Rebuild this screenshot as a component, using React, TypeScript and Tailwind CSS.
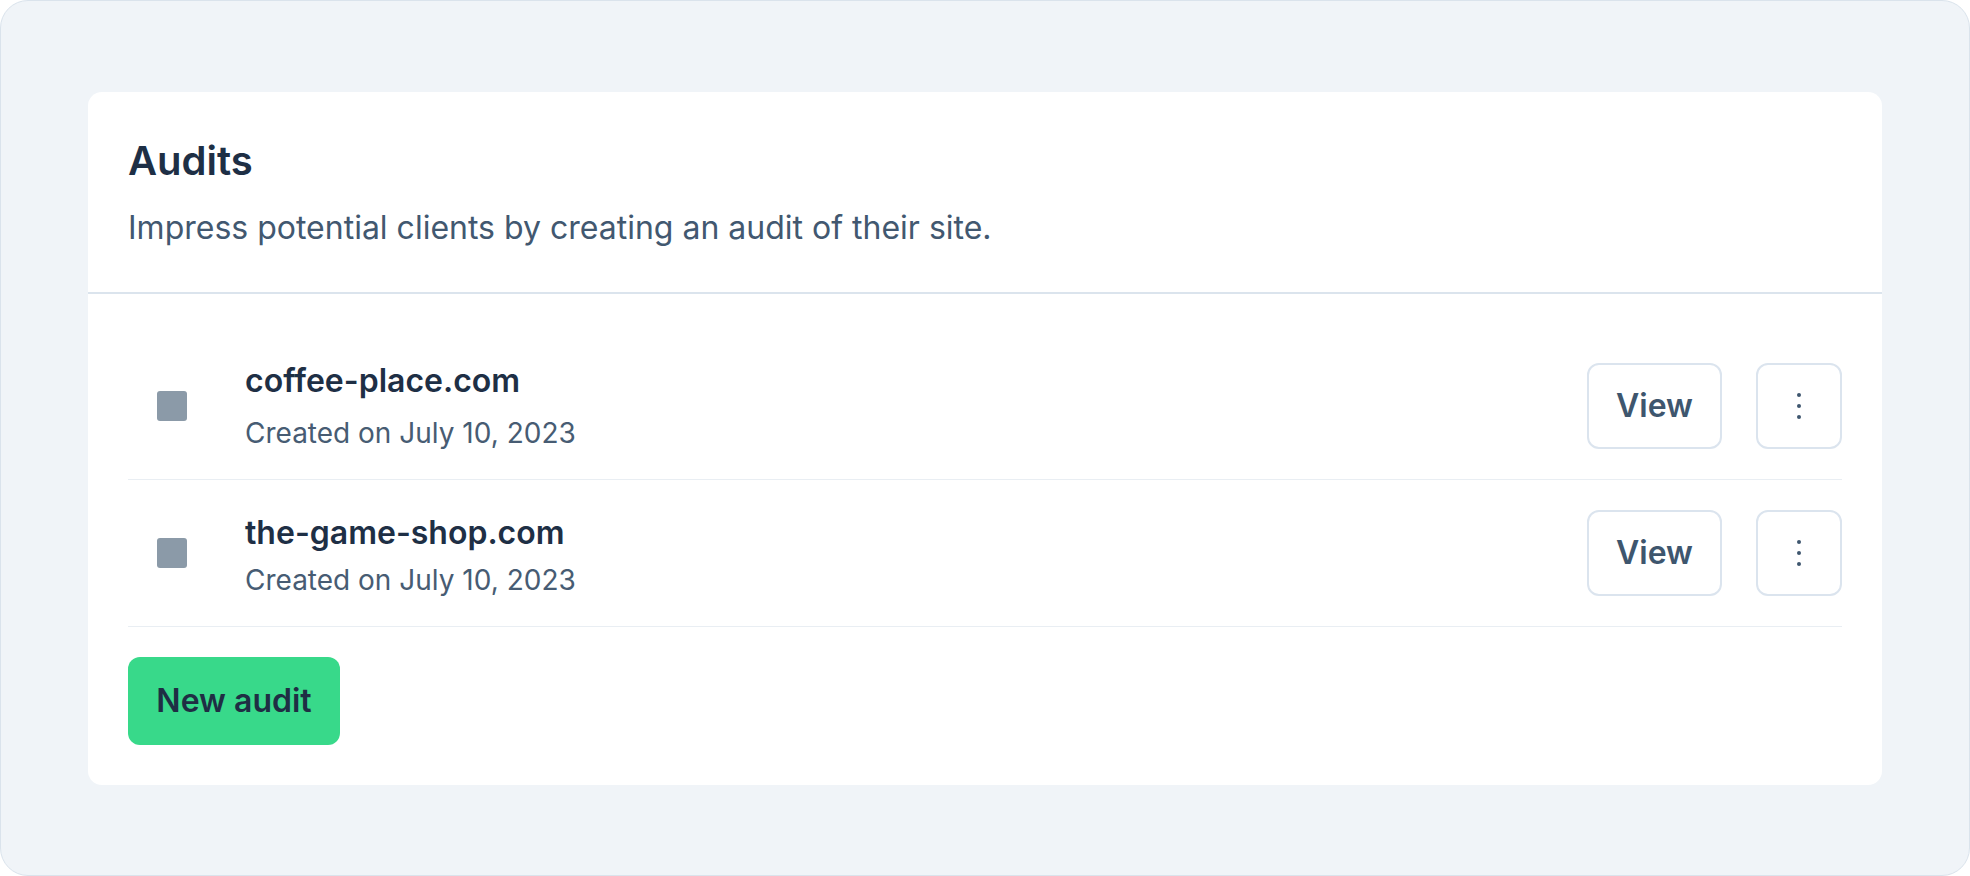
import React from "react";

const audits = [
  { id: "coffee", domain: "coffee-place.com", created: "Created on July 10, 2023", first: true },
  { id: "game", domain: "the-game-shop.com", created: "Created on July 10, 2023", first: false },
];

function DotsIcon() {
  return (
    <svg width="6" height="28" viewBox="0 0 6 28" fill="#3e566e" aria-hidden="true">
      <circle cx="3" cy="3" r="2" />
      <circle cx="3" cy="14" r="2" />
      <circle cx="3" cy="25" r="2" />
    </svg>
  );
}

function AuditRow({ domain, created, first }: { domain: string; created: string; first: boolean }) {
  return (
    <div className="flex h-[147px] items-center border-b border-[#e9eef3]">
      <div className="ml-[29px] h-[30px] w-[30px] shrink-0 rounded-[3px] bg-[#8b9aa8]" />
      <div className={first ? "ml-[58px] flex min-w-0 flex-1 flex-col" : "ml-[58px] flex min-w-0 flex-1 flex-col pt-[6px]"}>
        <p className="text-[32px] font-semibold leading-[32px] text-[#1e2f45]">{domain}</p>
        <p className={first ? "mt-[22px] text-[28px] leading-[28px] text-[#475c73]" : "mt-[17px] text-[28px] leading-[28px] text-[#475c73]"}>
          {created}
        </p>
      </div>
      <div className="flex items-center gap-[34px]">
        <button className="h-[86px] w-[135px] rounded-[12px] border-2 border-[#dbe4ee] bg-white text-[32px] font-semibold text-[#3e566e]">
          View
        </button>
        <button className="flex h-[86px] w-[86px] items-center justify-center rounded-[12px] border-2 border-[#dbe4ee] bg-white">
          <DotsIcon />
        </button>
      </div>
    </div>
  );
}

export default function App() {
  return (
    <div className="flex h-[876px] w-full flex-col justify-center rounded-[28px] border border-[#dae3ec] bg-[#f0f4f8] px-[87px] font-['Inter','Noto_Sans',sans-serif]">
      <div className="rounded-[14px] bg-white">
        <div className="border-b-2 border-[#dbe4ed] px-10 pb-[44px] pt-[45px]">
          <h2 className="text-[40px] font-semibold leading-[48px] text-[#1e2f45]">Audits</h2>
          <p className="mt-[23px] text-[32px] leading-[40px] text-[#425870]">
            Impress potential clients by creating an audit of their site.
          </p>
        </div>
        <div className="px-10 pb-10 pt-[39px]">
          {audits.map((audit) => (
            <AuditRow key={audit.id} domain={audit.domain} created={audit.created} first={audit.first} />
          ))}
          <button className="mt-[30px] h-[88px] w-[212px] rounded-[12px] bg-[#38d98a] text-[32px] font-semibold text-[#1f2e44]">
            New audit
          </button>
        </div>
      </div>
    </div>
  );
}
